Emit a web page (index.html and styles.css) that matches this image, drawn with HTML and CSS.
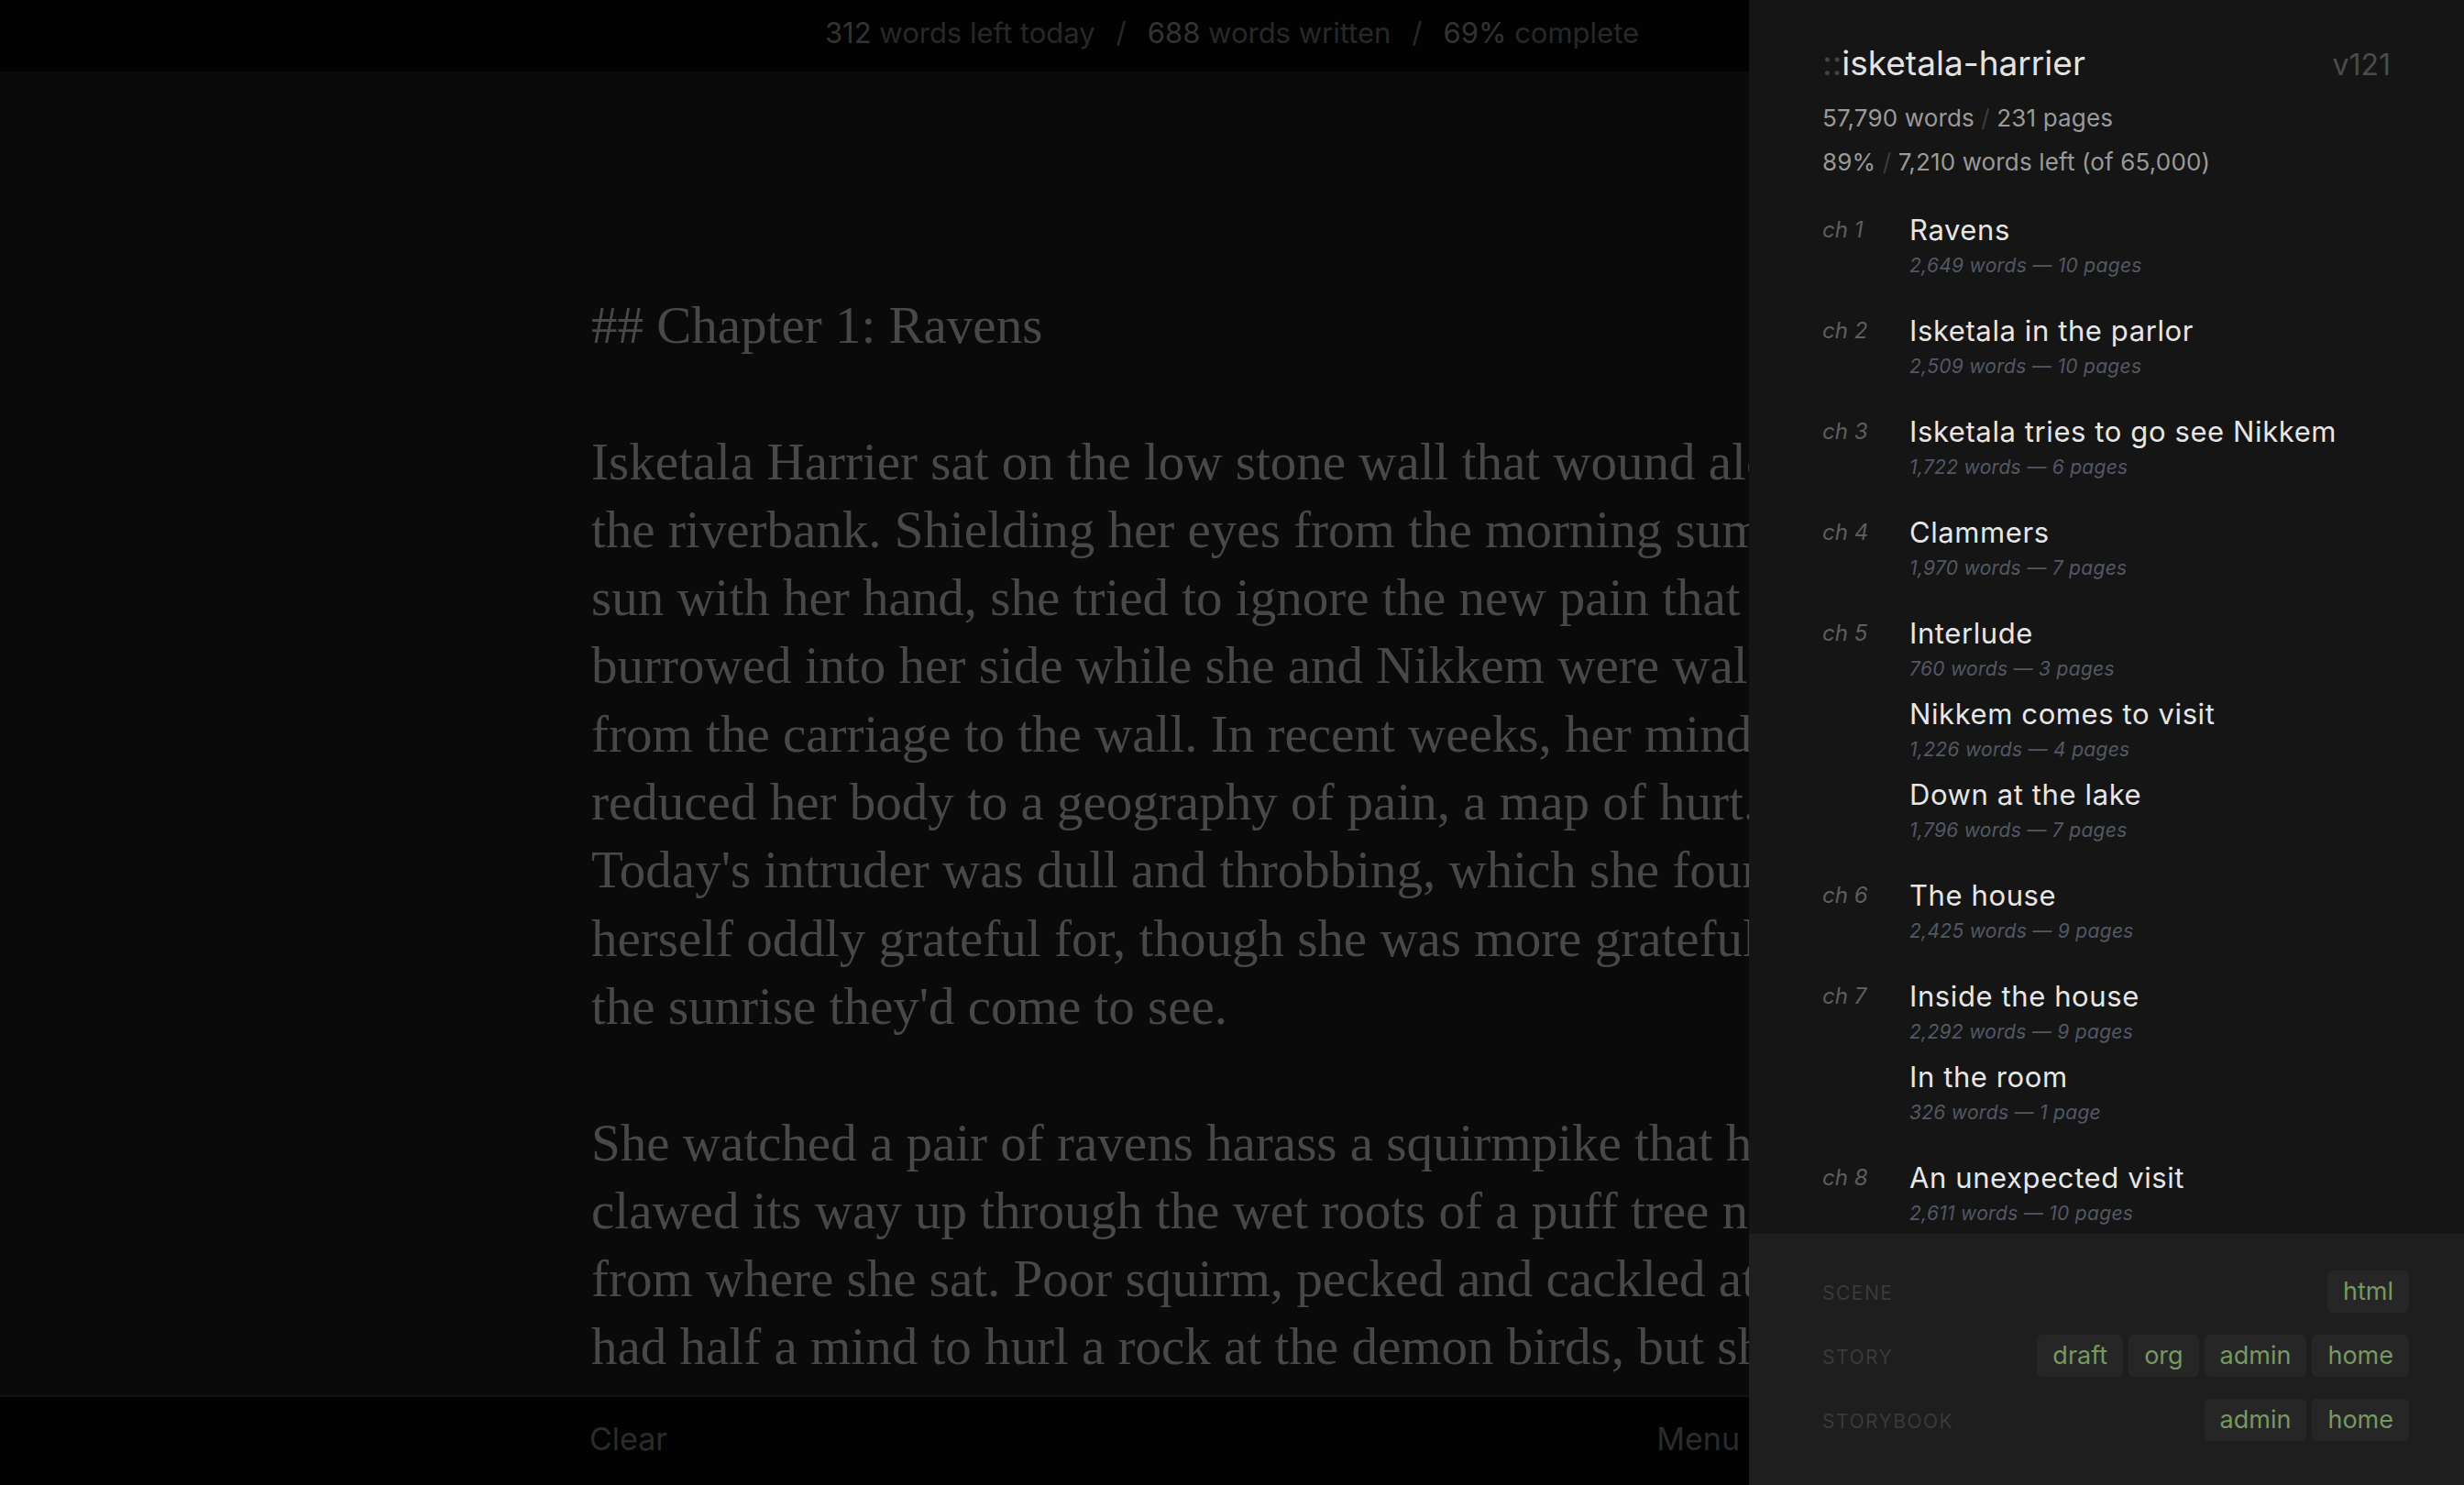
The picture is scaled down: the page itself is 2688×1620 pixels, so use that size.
FILE: index.html
```html
<!DOCTYPE html>
<html lang="en">
<head>
  <meta charset="UTF-8">
  <meta name="viewport" content="width=device-width, initial-scale=1.0">
  <title>isketala-harrier — Chapter 1: Ravens</title>
  <link rel="stylesheet" href="styles.css">
</head>
<body>
  <div class="app">
    <!-- Daily progress -->
    <header class="progress-bar">
      <span class="stat"><span class="num">312</span> words left today</span>
      <span class="sep">/</span>
      <span class="stat"><span class="num">688</span> words written</span>
      <span class="sep">/</span>
      <span class="stat"><span class="num">69%</span> complete</span>
    </header>

    <!-- Writing surface -->
    <main class="editor">
      <div class="manuscript">## Chapter 1: Ravens

Isketala Harrier sat on the low stone wall that wound along
the riverbank. Shielding her eyes from the morning summer
sun with her hand, she tried to ignore the new pain that had
burrowed into her side while she and Nikkem were walking
from the carriage to the wall. In recent weeks, her mind had
reduced her body to a geography of pain, a map of hurt.
Today's intruder was dull and throbbing, which she found
herself oddly grateful for, though she was more grateful for
the sunrise they'd come to see.

She watched a pair of ravens harass a squirmpike that had
clawed its way up through the wet roots of a puff tree not far
from where she sat. Poor squirm, pecked and cackled at. She
had half a mind to hurl a rock at the demon birds, but she
knew better than to waste what little strength she had left.</div>
    </main>

    <footer class="editor-bar">
      <button type="button" class="bar-btn">Clear</button>
      <button type="button" class="bar-btn">Menu</button>
    </footer>

    <!-- Story sidebar -->
    <aside class="sidebar">
      <div class="sidebar-head">
        <div class="story-title">
          <span class="story-name"><span class="colons">::</span>isketala-harrier</span>
          <span class="version">v121</span>
        </div>
        <div class="story-stats">
          <p>57,790 words <span class="slash">/</span> 231 pages</p>
          <p>89% <span class="slash">/</span> 7,210 words left (of 65,000)</p>
        </div>
      </div>

      <div class="chapters">
        <div class="chapter">
          <span class="chapter-num">ch 1</span>
          <div class="scenes">
            <div class="scene"><div class="scene-title">Ravens</div><div class="scene-meta">2,649 words — 10 pages</div></div>
          </div>
        </div>
        <div class="chapter">
          <span class="chapter-num">ch 2</span>
          <div class="scenes">
            <div class="scene"><div class="scene-title">Isketala in the parlor</div><div class="scene-meta">2,509 words — 10 pages</div></div>
          </div>
        </div>
        <div class="chapter">
          <span class="chapter-num">ch 3</span>
          <div class="scenes">
            <div class="scene"><div class="scene-title">Isketala tries to go see Nikkem</div><div class="scene-meta">1,722 words — 6 pages</div></div>
          </div>
        </div>
        <div class="chapter">
          <span class="chapter-num">ch 4</span>
          <div class="scenes">
            <div class="scene"><div class="scene-title">Clammers</div><div class="scene-meta">1,970 words — 7 pages</div></div>
          </div>
        </div>
        <div class="chapter">
          <span class="chapter-num">ch 5</span>
          <div class="scenes">
            <div class="scene"><div class="scene-title">Interlude</div><div class="scene-meta">760 words — 3 pages</div></div>
            <div class="scene"><div class="scene-title">Nikkem comes to visit</div><div class="scene-meta">1,226 words — 4 pages</div></div>
            <div class="scene"><div class="scene-title">Down at the lake</div><div class="scene-meta">1,796 words — 7 pages</div></div>
          </div>
        </div>
        <div class="chapter">
          <span class="chapter-num">ch 6</span>
          <div class="scenes">
            <div class="scene"><div class="scene-title">The house</div><div class="scene-meta">2,425 words — 9 pages</div></div>
          </div>
        </div>
        <div class="chapter">
          <span class="chapter-num">ch 7</span>
          <div class="scenes">
            <div class="scene"><div class="scene-title">Inside the house</div><div class="scene-meta">2,292 words — 9 pages</div></div>
            <div class="scene"><div class="scene-title">In the room</div><div class="scene-meta">326 words — 1 page</div></div>
          </div>
        </div>
        <div class="chapter">
          <span class="chapter-num">ch 8</span>
          <div class="scenes">
            <div class="scene"><div class="scene-title">An unexpected visit</div><div class="scene-meta">2,611 words — 10 pages</div></div>
          </div>
        </div>
      </div>

      <div class="tag-panel">
        <div class="tag-row">
          <span class="tag-label">Scene</span>
          <div class="tags"><span class="tag">html</span></div>
        </div>
        <div class="tag-row">
          <span class="tag-label">Story</span>
          <div class="tags">
            <span class="tag">draft</span><span class="tag">org</span><span class="tag">admin</span><span class="tag">home</span>
          </div>
        </div>
        <div class="tag-row">
          <span class="tag-label">Storybook</span>
          <div class="tags"><span class="tag">admin</span><span class="tag">home</span></div>
        </div>
      </div>
    </aside>
  </div>
</body>
</html>
```

FILE: styles.css
```css
:root {
  --ui-font: 'Inter', 'Liberation Sans', sans-serif;
  --text-font: 'Liberation Serif', serif;
  --sidebar-width: 780px;
  --bar-bg: #020202;
  --editor-bg: #0a0a0a;
  --editor-text: #484848;
  --sidebar-bg: #151515;
  --panel-bg: #1e1e1e;
  --tag-bg: #262626;
  --tag-text: #76995f;
}
html, body {
  margin: 0;
  padding: 0;
  height: 100%;
  overflow: hidden;
  background-color: #000;
}
.app {
  display: grid;
  grid-template-columns: 1fr var(--sidebar-width);
  grid-template-rows: 78px 1fr 98px;
  height: 100vh;
  font-family: var(--ui-font);
}

/* top progress - centred on the whole window, not just the editor */
.progress-bar {
  grid-column: 1;
  grid-row: 1;
  display: flex;
  justify-content: center;
  align-items: flex-start;
  padding-left: var(--sidebar-width);
  background-color: var(--bar-bg);
  font-size: 31px;
  line-height: 72px;
  color: #282828;
  white-space: nowrap;
}
.progress-bar .num {
  color: #333;
}
.progress-bar .sep {
  margin: 0 23px;
}

/* editor */
.editor {
  grid-column: 1;
  grid-row: 2;
  min-width: 0;
  background-color: var(--editor-bg);
  overflow: hidden;
}
.manuscript {
  margin-left: 645px;
  padding-top: 240px;
  overflow: hidden;
  font-family: var(--text-font);
  font-size: 57px;
  line-height: 74.3px;
  color: var(--editor-text);
  white-space: pre;
}

.editor-bar {
  grid-column: 1;
  grid-row: 3;
  display: flex;
  justify-content: space-between;
  align-items: center;
  padding: 0 10px 5px 643px;
  background-color: var(--bar-bg);
  border-top: 2px solid #121212;
}
.bar-btn {
  padding: 0;
  border: none;
  background: none;
  font-family: var(--ui-font);
  font-size: 34px;
  line-height: 40px;
  color: #2b2b2b;
  cursor: pointer;
}

/* sidebar */
.sidebar {
  grid-column: 2;
  grid-row: 1 / -1;
  display: flex;
  flex-direction: column;
  min-height: 0;
  background-color: var(--sidebar-bg);
}
.sidebar-head {
  padding: 44px 80px 0;
}
.story-title {
  display: flex;
  justify-content: space-between;
  align-items: baseline;
  line-height: 50px;
}
.story-name {
  font-size: 37px;
  color: #e3e3e3;
}
.story-name .colons {
  color: #444;
}
.version {
  font-size: 32px;
  color: #4b4b4b;
}
.story-stats {
  margin-top: 9px;
}
.story-stats p {
  margin: 0;
  font-size: 26px;
  letter-spacing: 0.15px;
  line-height: 48px;
  color: #9a9a9a;
}
.story-stats .slash {
  color: #3c3c3c;
}

.chapters {
  flex: 1;
  min-height: 0;
  overflow: hidden;
  padding: 30px 80px 0;
}
.chapter {
  display: grid;
  grid-template-columns: 95px 1fr;
  margin-bottom: 22px;
}
.chapter-num {
  font-size: 24px;
  line-height: 40px;
  font-style: italic;
  color: #5e5e5e;
}
.scene {
  padding-bottom: 10px;
}
.scene-title {
  font-size: 31px;
  letter-spacing: 0.6px;
  line-height: 40px;
  color: #e6e6e6;
}
.scene-meta {
  font-size: 21px;
  letter-spacing: 0.3px;
  line-height: 38px;
  font-style: italic;
  color: #535865;
}

.tag-panel {
  flex-shrink: 0;
  height: 274px;
  box-sizing: border-box;
  display: flex;
  flex-direction: column;
  gap: 24px;
  padding: 40px 60px 0 80px;
  background-color: var(--panel-bg);
}
.tag-row {
  display: flex;
  align-items: baseline;
}
.tag-label {
  font-size: 21px;
  letter-spacing: 1.5px;
  text-transform: uppercase;
  color: #3a3a3a;
}
.tags {
  display: flex;
  gap: 6px;
  margin-left: auto;
}
.tag {
  padding: 0 17px;
  font-size: 27px;
  line-height: 46px;
  color: var(--tag-text);
  background-color: var(--tag-bg);
  border-radius: 6px;
}
```
